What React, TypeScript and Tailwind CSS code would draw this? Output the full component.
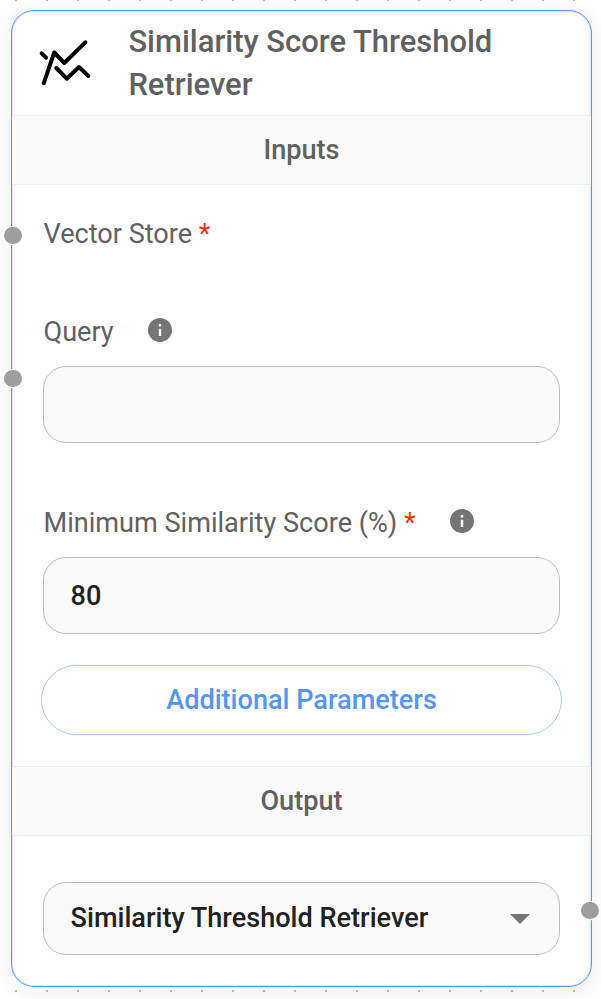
import type { ReactNode } from 'react';

const DOTS = Array.from({ length: 19 }, (_, i) => i);

function DotRow() {
  return (
    <div className="flex h-[2px] gap-[29px] pl-[15px]">
      {DOTS.map((i) => (
        <span key={i} className="h-[2px] w-[2px] shrink-0 bg-[#bdbdbd]" />
      ))}
    </div>
  );
}

function InfoIcon() {
  return (
    <span className="mb-[5px] ml-[34.5px] flex">
      <svg viewBox="2 2 20 20" className="h-6 w-6 fill-[#757575]">
        <path d="M12 2C6.48 2 2 6.48 2 12s4.48 10 10 10 10-4.48 10-10S17.52 2 12 2zm1 15h-2v-6h2v6zm0-8h-2V7h2v2z" />
      </svg>
    </span>
  );
}

function SectionBar({ children }: { children: ReactNode }) {
  return (
    <div className="flex h-[70px] shrink-0 items-center justify-center border-y border-[#eeeeee] bg-[#fafafa] text-[27.1px] font-medium text-[#616161]">
      {children}
    </div>
  );
}

function Required() {
  return <span className="text-[#f5300f]">&nbsp;*</span>;
}

function Handle({ className }: { className: string }) {
  return <span className={`absolute h-[17.4px] w-[17.4px] rounded-full bg-[#9e9e9e] shadow-[0_0_0_1.3px_white] ${className}`} />;
}

export default function App() {
  return (
    <main className="h-[999px] w-[601px] overflow-hidden bg-white font-['Roboto',sans-serif]">
      <div className="h-[10px]">
        <div className="-translate-y-px">
          <DotRow />
        </div>
      </div>
      <section className="relative ml-[11px] flex h-[977px] w-[581px] flex-col rounded-[23px] border border-[#5596f6] bg-white shadow-[0_4px_27px_0_rgba(32,40,45,0.08),inset_0_0_0_1px_#d9e8fd]">
        <header className="flex h-[104px] shrink-0 items-center pl-[26px]">
          <svg viewBox="0 0 54 50" className="h-[50px] w-[54px] shrink-0 fill-none stroke-black stroke-[4] [stroke-linecap:round] [stroke-linejoin:round]">
            <path d="M3.7 15.3L8 19.7M5.7 45.3L16.2 14.5L26.3 25L47.3 4.3M18.3 30L28.7 40.7L41 29L50.3 38" />
          </svg>
          <h1 className="ml-[36.4px] w-[400px] text-[30.95px] leading-[43px] font-medium text-[#616161]">
            Similarity Score Threshold Retriever
          </h1>
        </header>
        <SectionBar>Inputs</SectionBar>
        <div className="flex shrink-0 flex-col px-[31px] pt-[29px] text-[27.1px] text-[#616161]">
          <div className="h-10 pl-[0.5px] leading-10">
            Vector Store<Required />
          </div>
          <div className="mt-[58px] flex h-10 items-center pl-[0.5px] leading-10">
            Query
            <InfoIcon />
          </div>
          <div className="mt-[14px] h-[77px] w-[517px] rounded-[23px] border border-[#bdbdbd] bg-[#fafafa]" />
          <div className="mt-[60px] flex h-10 items-center pl-[0.5px] leading-10">
            Minimum Similarity Score (%)<Required />
            <InfoIcon />
          </div>
          <div className="mt-[14px] flex h-[77px] w-[517px] items-center rounded-[23px] border border-[#bdbdbd] bg-[#fafafa] pt-[2px] pl-[26.6px] font-medium text-[#212121]">
            80
          </div>
          <button className="mt-[31px] -ml-[2px] h-[70px] w-[521px] rounded-full border border-[#a6cafb] text-[27.1px] font-medium text-[#5596f6]">
            Additional Parameters
          </button>
        </div>
        <div className="mt-[31px] flex flex-col">
          <SectionBar>Output</SectionBar>
        </div>
        <div className="mt-[46px] ml-[31px] flex h-[73px] w-[517px] items-center justify-between rounded-[23px] border border-[#bdbdbd] bg-[#fafafa] pr-[29.5px] pl-[26.6px] text-[27.1px] font-medium text-[#212121]">
          Similarity Threshold Retriever
          <svg viewBox="0 0 20 10" className="mt-px h-[10px] w-5 fill-[#757575]">
            <path d="M0 0H20L10 10Z" />
          </svg>
        </div>
        <Handle className="top-[215.6px] -left-[7.7px]" />
        <Handle className="top-[359px] -left-[7.7px]" />
        <Handle className="top-[891px] -right-[7.7px]" />
      </section>
      <div className="pt-[3px]">
        <DotRow />
      </div>
    </main>
  );
}
